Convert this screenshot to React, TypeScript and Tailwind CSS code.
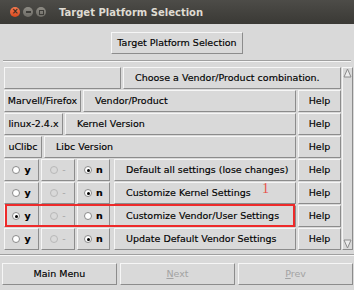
import type { ReactNode } from "react";

const BTN =
  "flex items-center h-[22px] border border-t-[#f6f6f6] border-l-[#f6f6f6] border-r-[#8c8c8c] border-b-[#8c8c8c] bg-[#d9d9d9] text-[9.5px] whitespace-nowrap";

function Btn({ className = "", dim, children }: { className?: string; dim?: boolean; children?: ReactNode }) {
  const tone = dim ? "text-[#a3a3a3]" : "text-black [-webkit-text-stroke:0.15px_#000]";
  return <div className={`${BTN} ${tone} ${className}`}>{children}</div>;
}

function Radio({ checked, disabled, label }: { checked?: boolean; disabled?: boolean; label: string }) {
  return (
    <Btn dim={disabled} className="justify-center gap-[4px]">
      <span
        className={`flex h-[8px] w-[8px] items-center justify-center rounded-full border ${
          disabled ? "border-[#b8b8b8] bg-[#d9d9d9]" : "border-[#8a8a8a] bg-white"
        }`}
      >
        {checked && <span className="h-[3px] w-[3px] rounded-full bg-black" />}
      </span>
      <span className={disabled ? "" : "font-bold"}>{label}</span>
    </Btn>
  );
}

const settings = [
  { label: "Default all settings (lose changes)", y: false, n: true },
  { label: "Customize Kernel Settings", y: false, n: true },
  { label: "Customize Vendor/User Settings", y: true, n: false, marked: true },
  { label: "Update Default Vendor Settings", y: false, n: true },
];

const picks = [
  { value: "Marvell/Firefox", w: "w-[77px]", label: "Vendor/Product" },
  { value: "linux-2.4.x", w: "w-[59px]", label: "Kernel Version" },
  { value: "uClibc", w: "w-[38px]", label: "Libc Version" },
];

export default function App() {
  return (
    <div className="relative flex h-[290px] w-[354px] flex-col overflow-hidden bg-[#d9d9d9] font-['DejaVu_Sans',sans-serif]">
      {/* title bar */}
      <div className="flex h-[24px] items-center bg-gradient-to-b from-[#4d4c48] to-[#3a3935]">
        <div className="ml-[10px] flex items-center gap-[3px]">
          <span className="flex h-[10px] w-[10px] items-center justify-center rounded-full bg-gradient-to-b from-[#f47a4f] to-[#d9481c] text-[8px] leading-none font-bold text-[#3a2a20]">
            ×
          </span>
          <span className="flex h-[10px] w-[10px] items-center justify-center rounded-full bg-gradient-to-b from-[#8e8c85] to-[#6e6c66]">
            <span className="h-[1.5px] w-[5px] bg-[#3e3d39]" />
          </span>
          <span className="flex h-[10px] w-[10px] items-center justify-center rounded-full bg-gradient-to-b from-[#8e8c85] to-[#6e6c66]">
            <span className="h-[5px] w-[5px] border border-[#3e3d39]" />
          </span>
        </div>
        <span className="ml-[13px] text-[10px] font-bold text-[#dfdbd2]">Target Platform Selection</span>
      </div>

      {/* header */}
      <div className="flex justify-center pt-[8px]">
        <Btn className="h-[19px] w-[132px] justify-center">Target Platform Selection</Btn>
      </div>
      <div className="mx-[3px] mt-[6px] border-t border-b border-t-[#a0a0a0] border-b-[#f6f6f6]" />

      {/* option list */}
      <div className="mt-[5px] flex gap-[1px] pl-[4px] pr-[1px]">
        <div className="flex w-[337px] flex-col gap-[1px]">
          <div className="flex gap-[2px]">
            <Btn className="w-[117px]" />
            <Btn className="flex-1 pl-[11px]">Choose a Vendor/Product combination.</Btn>
          </div>
          {picks.map((p) => (
            <div key={p.value} className="flex gap-[2px]">
              <Btn className={`${p.w} justify-center`}>{p.value}</Btn>
              <Btn className="flex-1 pl-[11px]">{p.label}</Btn>
              <Btn className="w-[43px] justify-center">Help</Btn>
            </div>
          ))}
          {settings.map((s) => (
            <div key={s.label} className="relative flex gap-[2px]">
              <div className="grid w-[108px] grid-cols-[35px_34px_33px] gap-[2px]">
                <Radio checked={s.y} label="y" />
                <Radio disabled label="-" />
                <Radio checked={s.n} label="n" />
              </div>
              <Btn className="flex-1 pl-[11px]">{s.label}</Btn>
              <Btn className="w-[43px] justify-center">Help</Btn>
              {s.marked && (
                <div className="absolute top-[-1px] bottom-[0px] left-[1px] right-[46px] border-2 border-[#ee2a2a]" />
              )}
            </div>
          ))}
        </div>
        {/* scrollbar */}
        <div className="relative flex w-[11px] flex-col justify-between border border-t-[#f6f6f6] border-l-[#f6f6f6] border-r-[#8c8c8c] border-b-[#8c8c8c] bg-[#d9d9d9]">
          <svg width="9" height="10" viewBox="0 0 9 10">
            <polygon points="4.5,1 8,9 1,9" fill="#ececec" stroke="#8c8c8c" strokeWidth="1" />
          </svg>
          <svg width="9" height="10" viewBox="0 0 9 10">
            <polygon points="1,1 8,1 4.5,9" fill="#ececec" stroke="#8c8c8c" strokeWidth="1" />
          </svg>
        </div>
      </div>

      <div className="mt-[4px] border-t border-b border-t-[#a0a0a0] border-b-[#f6f6f6]" />

      {/* bottom buttons */}
      <div className="mt-[7px] grid grid-cols-3 gap-[3px] pl-[2px] pr-[1px]">
        <Btn className="justify-center">Main Menu</Btn>
        <Btn dim className="justify-center">
          <span>
            <span className="underline">N</span>ext
          </span>
        </Btn>
        <Btn dim className="justify-center">
          <span>
            <span className="underline">P</span>rev
          </span>
        </Btn>
      </div>

      {/* annotation */}
      <span className="pointer-events-none absolute left-[262px] top-[178px] font-['Liberation_Serif',serif] text-[14px] text-[#e8504a]">
        1
      </span>
    </div>
  );
}
